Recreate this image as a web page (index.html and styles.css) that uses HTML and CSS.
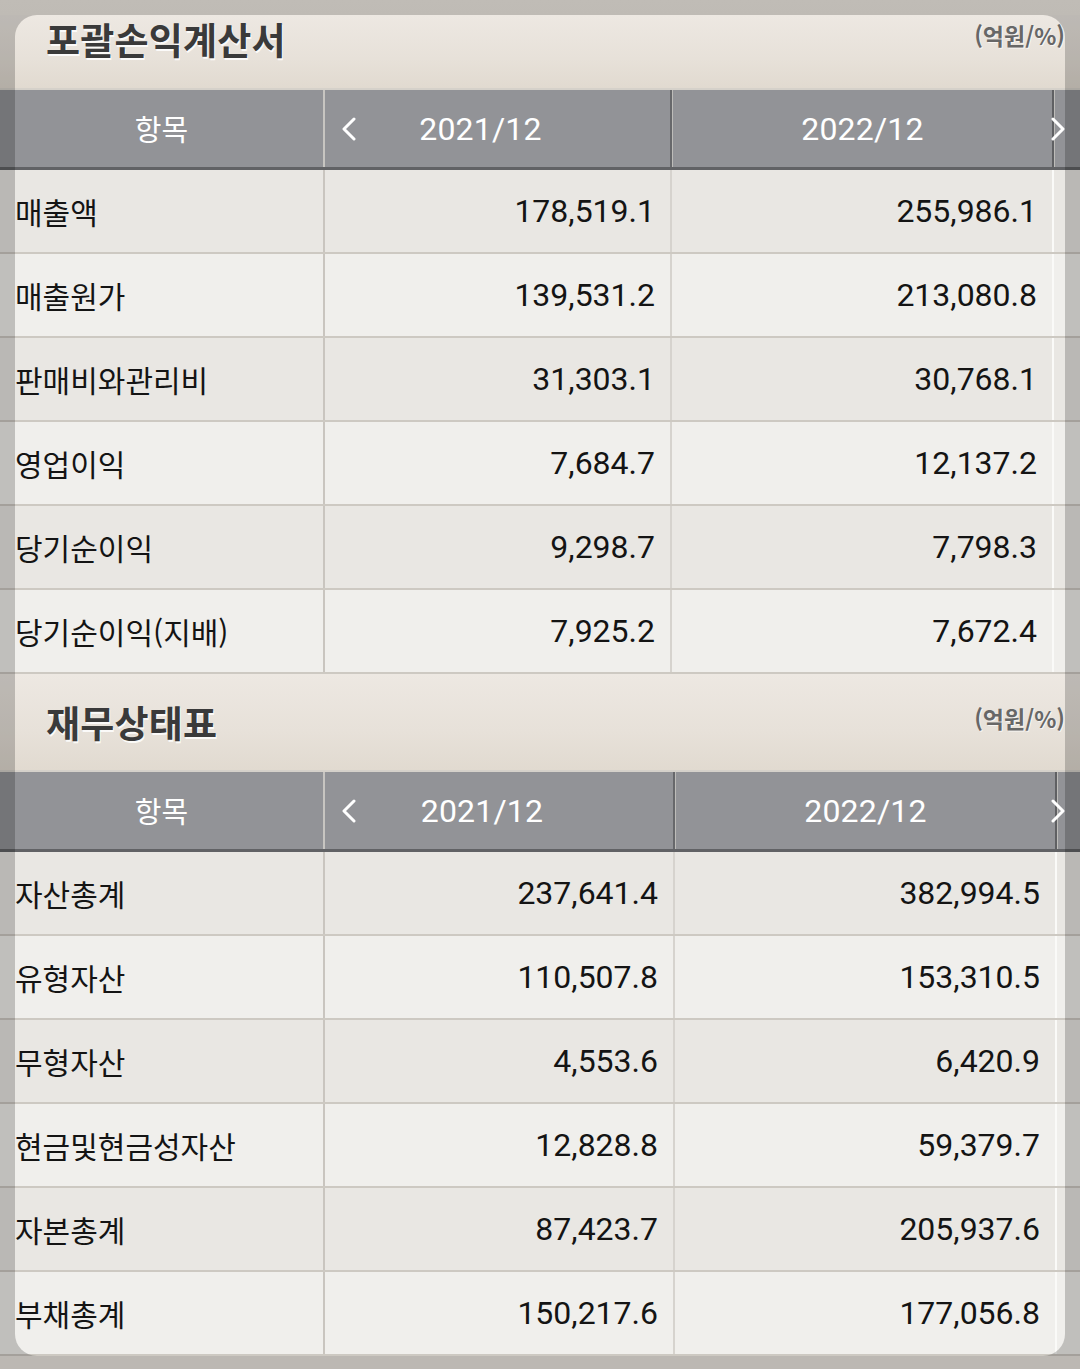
FILE: index.html
```html
<!DOCTYPE html>
<html lang="ko">
<head>
<meta charset="utf-8">
<title>재무정보</title>
<link rel="stylesheet" href="styles.css">
</head>
<body>
<div class="screen">
  <section class="sheet sheet-income">
    <div class="sheet-title sheet-title-first">
      <h2 class="title-text">포괄손익계산서</h2>
      <span class="unit">(억원/%)</span>
    </div>
    <div class="grid-row head-row">
      <div class="cell head-label">항목</div>
      <div class="cell head-year head-prev">
        <svg class="chev chev-left" viewBox="0 0 16 24" width="16" height="24"><polyline points="13,2 3,12 13,22" /></svg>
        2021/12
      </div>
      <div class="cell head-year head-cur">2022/12</div>
      <div class="cell head-more"></div>
      <svg class="chev chev-right" viewBox="0 0 16 24" width="16" height="24"><polyline points="3,2 13,12 3,22" /></svg>
    </div>
    <div class="grid-row data-row"><div class="cell label">매출액</div><div class="cell num">178,519.1</div><div class="cell num num-cur">255,986.1</div><div class="cell more"></div></div>
    <div class="grid-row data-row"><div class="cell label">매출원가</div><div class="cell num">139,531.2</div><div class="cell num num-cur">213,080.8</div><div class="cell more"></div></div>
    <div class="grid-row data-row"><div class="cell label">판매비와관리비</div><div class="cell num">31,303.1</div><div class="cell num num-cur">30,768.1</div><div class="cell more"></div></div>
    <div class="grid-row data-row"><div class="cell label">영업이익</div><div class="cell num">7,684.7</div><div class="cell num num-cur">12,137.2</div><div class="cell more"></div></div>
    <div class="grid-row data-row"><div class="cell label">당기순이익</div><div class="cell num">9,298.7</div><div class="cell num num-cur">7,798.3</div><div class="cell more"></div></div>
    <div class="grid-row data-row"><div class="cell label">당기순이익(지배)</div><div class="cell num">7,925.2</div><div class="cell num num-cur">7,672.4</div><div class="cell more"></div></div>
  </section>

  <section class="sheet sheet-balance">
    <div class="sheet-title">
      <h2 class="title-text">재무상태표</h2>
      <span class="unit">(억원/%)</span>
    </div>
    <div class="grid-row head-row">
      <div class="cell head-label">항목</div>
      <div class="cell head-year head-prev">
        <svg class="chev chev-left" viewBox="0 0 16 24" width="16" height="24"><polyline points="13,2 3,12 13,22" /></svg>
        2021/12
      </div>
      <div class="cell head-year head-cur">2022/12</div>
      <div class="cell head-more"></div>
      <svg class="chev chev-right" viewBox="0 0 16 24" width="16" height="24"><polyline points="3,2 13,12 3,22" /></svg>
    </div>
    <div class="grid-row data-row"><div class="cell label">자산총계</div><div class="cell num">237,641.4</div><div class="cell num num-cur">382,994.5</div><div class="cell more"></div></div>
    <div class="grid-row data-row"><div class="cell label">유형자산</div><div class="cell num">110,507.8</div><div class="cell num num-cur">153,310.5</div><div class="cell more"></div></div>
    <div class="grid-row data-row"><div class="cell label">무형자산</div><div class="cell num">4,553.6</div><div class="cell num num-cur">6,420.9</div><div class="cell more"></div></div>
    <div class="grid-row data-row"><div class="cell label">현금및현금성자산</div><div class="cell num">12,828.8</div><div class="cell num num-cur">59,379.7</div><div class="cell more"></div></div>
    <div class="grid-row data-row"><div class="cell label">자본총계</div><div class="cell num">87,423.7</div><div class="cell num num-cur">205,937.6</div><div class="cell more"></div></div>
    <div class="grid-row data-row"><div class="cell label">부채총계</div><div class="cell num">150,217.6</div><div class="cell num num-cur">177,056.8</div><div class="cell more"></div></div>
  </section>

  <div class="card-frame"></div>
</div>
</body>
</html>
```

FILE: styles.css
```css
* { box-sizing: border-box; margin: 0; padding: 0; }

html, body {
  width: 1080px;
  height: 1369px;
  overflow: hidden;
}

body {
  background: #ece7e0;
  font-family: "Noto Sans CJK KR", "Noto Sans", sans-serif;
  color: #111;
}

.screen {
  position: relative;
  width: 1080px;
  height: 1369px;
  padding-top: 15px;
  background: linear-gradient(180deg, #f0ebe4 0px, #efeae3 15px, #ece7e0 100%);
  overflow: hidden;
}

.sheet {
  width: 1080px;
}

.sheet-title {
  height: 96px;
  display: flex;
  align-items: center;
  justify-content: space-between;
  padding: 0 15px 0 46px;
  background: linear-gradient(180deg, #ede8e2 0%, #e7e1d9 60%, #e1dad0 100%);
}

.sheet-title-first {
  height: 73px;
  padding-bottom: 24px;
}

.title-text {
  font-size: 37px;
  font-weight: 700;
  color: #3a3a3a;
  letter-spacing: 0.2px;
  text-shadow: 1px 2px 0 rgba(255, 255, 255, 0.85);
  line-height: 1;
}

.unit {
  font-size: 23px;
  font-weight: 700;
  color: #676767;
  line-height: 1;
  margin-top: -8px;
  text-shadow: 1px 1px 0 rgba(255, 255, 255, 0.7);
}

.grid-row {
  display: grid;
  width: 1080px;
}

.sheet-income .grid-row { grid-template-columns: 325px 347px 382px 1fr; }
.sheet-balance .grid-row { grid-template-columns: 325px 350px 382px 1fr; }

.cell {
  display: flex;
  align-items: center;
}

/* header */
.head-row {
  position: relative;
  height: 82px;
  background: #929397;
  border-top: 2px solid #d5d1ca;
  border-bottom: 3px solid #616265;
  color: #fff;
}

.head-label {
  justify-content: center;
  font-size: 29px;
  border-right: 2px solid #c7c5c1;
  padding-bottom: 2px;
}

.head-year {
  justify-content: center;
  font-family: "Roboto", "Noto Sans", sans-serif;
  font-size: 32px;
  letter-spacing: 0.2px;
}

.head-prev {
  position: relative;
  padding-right: 34px;
  border-right: 2px solid #67686b;
}

.head-cur {
  border-left: 1px solid #bdbcb9;
  border-right: 2px solid #5f6063;
}

.head-more {
  border-left: 1px solid #bdbcb9;
}

.chev {
  position: absolute;
  top: 50%;
  margin-top: -12px;
  fill: none;
  stroke: #fff;
  stroke-width: 3;
  stroke-linecap: round;
  stroke-linejoin: round;
}

.chev-left { left: 16px; }
.chev-right { right: 14px; }

/* data rows */
.data-row {
  height: 84px;
  background: #e9e7e3;
  border-bottom: 2px solid #cdc9c2;
}

.data-row:nth-of-type(even) {
  background: #f0efec;
}

.label {
  padding-left: 15px;
  font-size: 30px;
  color: #141414;
  border-right: 2px solid #c9c5bf;
  white-space: nowrap;
}

.num {
  justify-content: flex-end;
  padding-right: 15px;
  font-family: "Roboto", "Noto Sans", sans-serif;
  font-size: 32px;
  color: #141414;
  border-right: 2px solid #d6d3ce;
}

.num-cur {
  border-right: 2px solid #fafaf8;
}

/* edge-darkening overlay around the rounded card */
.card-frame {
  position: absolute;
  top: 15px;
  left: 15px;
  right: 15px;
  bottom: 13px;
  border-radius: 22px;
  box-shadow: 0 0 0 60px rgba(0, 0, 0, 0.2);
  pointer-events: none;
}
```
